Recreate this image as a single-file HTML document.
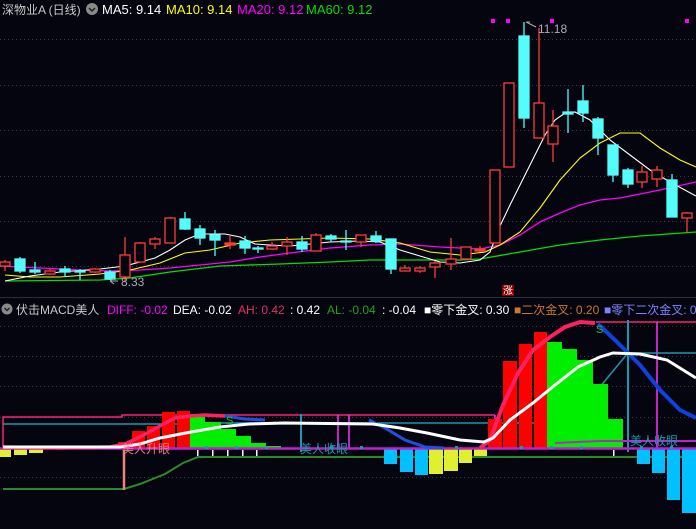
<!DOCTYPE html>
<html><head><meta charset="utf-8"><style>
html,body{margin:0;padding:0;background:#05050f;}
svg{display:block}
text{font-family:"Liberation Sans","Noto Sans CJK SC",sans-serif;}
</style></head><body>
<svg width="696" height="529" viewBox="0 0 696 529" xmlns="http://www.w3.org/2000/svg">
<rect width="696" height="529" fill="#05050f"/>
<g stroke="#3a3a48" stroke-dasharray="1,3" stroke-width="1">
<line x1="0" y1="39.5" x2="696" y2="39.5"/><line x1="0" y1="85.5" x2="696" y2="85.5"/><line x1="0" y1="130.5" x2="696" y2="130.5"/><line x1="0" y1="176.5" x2="696" y2="176.5"/><line x1="0" y1="221.5" x2="696" y2="221.5"/><line x1="0" y1="266.5" x2="696" y2="266.5"/>
<line x1="0" y1="326.5" x2="696" y2="326.5"/><line x1="0" y1="356.5" x2="696" y2="356.5"/><line x1="0" y1="386.5" x2="696" y2="386.5"/><line x1="0" y1="417.5" x2="696" y2="417.5"/><line x1="0" y1="477.5" x2="696" y2="477.5"/>
</g>
<line x1="0" y1="297.5" x2="696" y2="297.5" stroke="#2e2e38"/>
<text x="2" y="14" font-size="12" fill="#c8c8c8">深物业A (日线)</text>
<circle cx="92" cy="9" r="6" fill="#8a8a8a"/><path d="M89 8 L92 11 L95 8" stroke="#202020" stroke-width="1.5" fill="none"/>
<text x="102" y="14" font-size="13" fill="#ffffff">MA5: 9.14</text>
<text x="166" y="14" font-size="13" fill="#ffff00">MA10: 9.14</text>
<text x="237" y="14" font-size="13" fill="#ff00ff">MA20: 9.12</text>
<text x="306" y="14" font-size="13" fill="#00e000">MA60: 9.12</text>
<g fill="#ff00ff"><rect x="491" y="19" width="4" height="4"/><rect x="506" y="19" width="4" height="4"/><rect x="550" y="19" width="4" height="4"/><rect x="685" y="19" width="4" height="4"/></g>
<polyline fill="none" stroke="#00e000" stroke-width="1.3" points="5,281 100,280 130,278 170,272 220,266 280,264 330,262 370,260 420,260 460,260 480,259 520,252 560,245 600,240 640,236 696,232"/>
<polyline fill="none" stroke="#ff00ff" stroke-width="1.3" points="0,266 40,268 80,270 110,271 140,270 170,268 200,265 230,262 260,257 290,253 330,248 370,245 400,244 440,247 480,249 500,245 520,235 540,222 560,213 580,205 600,200 620,198 660,190 696,182"/>
<polyline fill="none" stroke="#ffff00" stroke-width="1.1" points="5,275 30,277 60,277 100,274 130,270 160,263 185,253 210,250 240,243 270,240 300,239 330,238 370,239 400,243 430,252 460,255 485,252 500,245 520,232 540,208 560,180 580,158 600,143 620,133 640,133 660,148 680,160 696,167"/>
<polyline fill="none" stroke="#ffffff" stroke-width="1.1" points="5,281 30,276 60,272 100,269 125,266 140,262 155,258 170,250 185,240 195,236 205,234 225,234 240,237 255,244 270,245 290,246 310,244 330,242 360,241 380,242 400,250 420,256 440,262 460,263 480,260 490,252 500,226 510,205 520,185 530,165 545,135 555,120 565,113 575,112 590,120 610,140 630,155 650,170 670,182 696,196"/>
<g stroke="#ff3b3b" stroke-width="1.3" fill="#05050f">
<line x1="5" y1="260" x2="5" y2="271"/><rect x="0" y="262" width="10" height="4"/>
<line x1="50" y1="268" x2="50" y2="275"/><rect x="45" y="271" width="10" height="3"/>
<line x1="95" y1="268" x2="95" y2="273"/><rect x="90" y="269" width="10" height="3"/>
<line x1="125" y1="237" x2="125" y2="282"/><rect x="120" y="255" width="10" height="22"/>
<line x1="140" y1="242" x2="140" y2="262"/><rect x="135" y="243" width="10" height="19"/>
<line x1="155" y1="237" x2="155" y2="249"/><rect x="150" y="239" width="10" height="5"/>
<line x1="170" y1="217" x2="170" y2="243"/><rect x="165" y="218" width="10" height="25"/>
<line x1="230" y1="236" x2="230" y2="249"/><rect x="225" y="243" width="10" height="2" fill="#ff3b3b"/>
<line x1="272" y1="242" x2="272" y2="250"/><rect x="267" y="246" width="10" height="3"/>
<line x1="287" y1="237" x2="287" y2="255"/><rect x="282" y="242" width="10" height="4"/>
<line x1="316" y1="233" x2="316" y2="251"/><rect x="311" y="235" width="10" height="16"/>
<line x1="361" y1="235" x2="361" y2="247"/><rect x="356" y="235" width="10" height="7"/>
<line x1="405" y1="265" x2="405" y2="271"/><rect x="400" y="268" width="10" height="3"/>
<line x1="420" y1="266" x2="420" y2="273"/><rect x="415" y="268" width="10" height="3"/>
<line x1="435" y1="261" x2="435" y2="278"/><rect x="430" y="263" width="10" height="4"/>
<line x1="451" y1="238" x2="451" y2="270"/><rect x="446" y="259" width="10" height="5"/>
<rect x="461" y="247" width="10" height="12"/>
<line x1="480" y1="246" x2="480" y2="252"/><rect x="475" y="249" width="10" height="2" fill="#ff3b3b"/>
<rect x="490" y="170" width="10" height="73"/>
<rect x="504" y="83" width="10" height="84"/>
<line x1="539" y1="28" x2="539" y2="138"/><rect x="534" y="103" width="10" height="35"/>
<line x1="553" y1="110" x2="553" y2="162"/><rect x="548" y="126" width="10" height="18"/>
<line x1="642" y1="166" x2="642" y2="188"/><rect x="637" y="172" width="10" height="10"/>
<line x1="657" y1="166" x2="657" y2="187"/><rect x="652" y="170" width="10" height="9"/>
<line x1="687" y1="212" x2="687" y2="232"/><rect x="682" y="213" width="10" height="5"/>
</g>
<g stroke="#54fcfc" stroke-width="1.3" fill="#54fcfc">
<line x1="20" y1="257" x2="20" y2="273"/><rect x="15" y="259" width="10" height="12"/>
<line x1="35" y1="262" x2="35" y2="274"/><rect x="30" y="270" width="10" height="2"/>
<line x1="65" y1="266" x2="65" y2="277"/><rect x="60" y="269" width="10" height="3"/>
<line x1="80" y1="269" x2="80" y2="280"/><rect x="75" y="271" width="10" height="1"/>
<line x1="110" y1="270" x2="110" y2="280"/><rect x="105" y="272" width="10" height="7"/>
<line x1="185" y1="212" x2="185" y2="230"/><rect x="180" y="219" width="10" height="10"/>
<line x1="200" y1="225" x2="200" y2="245"/><rect x="195" y="229" width="10" height="9"/>
<line x1="215" y1="230" x2="215" y2="256"/><rect x="210" y="235" width="10" height="5"/>
<line x1="245" y1="236" x2="245" y2="254"/><rect x="240" y="241" width="10" height="7"/>
<line x1="258" y1="246" x2="258" y2="253"/><rect x="253" y="248" width="10" height="1"/>
<line x1="302" y1="236" x2="302" y2="252"/><rect x="297" y="242" width="10" height="7"/>
<line x1="331" y1="234" x2="331" y2="242"/><rect x="326" y="236" width="10" height="3"/>
<line x1="346" y1="230" x2="346" y2="250"/><rect x="341" y="241" width="10" height="1"/>
<line x1="376" y1="231" x2="376" y2="243"/><rect x="371" y="236" width="10" height="5"/>
<line x1="391" y1="239" x2="391" y2="274"/><rect x="386" y="239" width="10" height="30"/>
<line x1="524" y1="22" x2="524" y2="128"/><rect x="519" y="36" width="10" height="82"/>
<line x1="568" y1="89" x2="568" y2="133"/><rect x="563" y="112" width="10" height="2"/>
<line x1="583" y1="85" x2="583" y2="122"/><rect x="578" y="101" width="10" height="12"/>
<line x1="598" y1="117" x2="598" y2="155"/><rect x="593" y="119" width="10" height="19"/>
<line x1="613" y1="145" x2="613" y2="182"/><rect x="608" y="145" width="10" height="30"/>
<line x1="628" y1="168" x2="628" y2="188"/><rect x="623" y="170" width="10" height="14"/>
<line x1="672" y1="174" x2="672" y2="217"/><rect x="667" y="180" width="10" height="37"/>
</g>
<path d="M526 22 L530 22 M526 22 L536 27" stroke="#aaa" fill="none"/>
<text x="538" y="33" font-size="12" fill="#a8a8b8">11.18</text>
<path d="M118 281 L110 281 M110 281 L114 278 M110 281 L114 284" stroke="#aaa" fill="none"/>
<text x="121" y="286" font-size="12" fill="#a8a8b8">8.33</text>
<rect x="502" y="285" width="12" height="11" fill="#8a0000"/>
<text x="503" y="294" font-size="10" fill="#ffffff">涨</text>
<circle cx="7" cy="309" r="5.5" fill="#8a8a8a"/><path d="M4.5 308 L7 310.5 L9.5 308" stroke="#202020" stroke-width="1.4" fill="none"/>
<text font-size="12" y="314"><tspan x="16" fill="#c8c8c8">伏击MACD美人</tspan><tspan x="107" fill="#ff00ff">DIFF: -0.02</tspan><tspan x="173" fill="#ffffff">DEA: -0.02</tspan><tspan x="238" fill="#e03060">AH: 0.42</tspan><tspan x="290" fill="#ffffff">: 0.42</tspan><tspan x="327" fill="#22a022">AL: -0.04</tspan><tspan x="382" fill="#ffffff">: -0.04</tspan><tspan x="424" fill="#ffffff">■零下金叉: 0.30</tspan><tspan x="514" fill="#c87830">■二次金叉: 0.20</tspan><tspan x="604" fill="#8080ff">■零下二次金叉: 0</tspan></text>
<g fill="none" stroke-width="1.5">
<polyline stroke="#ff2070" points="3,448 3,417 122,417 122,415 495,415"/>
<line x1="338" y1="415" x2="338" y2="448" stroke="#ff30ff"/>
<line x1="349" y1="415" x2="349" y2="448" stroke="#ff30ff"/>
<line x1="495" y1="415" x2="495" y2="448" stroke="#ff30ff"/>
<line x1="596" y1="322" x2="696" y2="322" stroke="#ff2070"/>
<line x1="657" y1="322" x2="657" y2="448" stroke="#ff30ff"/>
<polyline stroke="#1a9aae" points="3,424 200,424 200,423 570,423 628,353 696,353"/>
<line x1="301" y1="414" x2="301" y2="452" stroke="#1a9aae" stroke-width="2"/>
<line x1="628" y1="320" x2="628" y2="452" stroke="#1a9aae" stroke-width="2"/>
<polyline stroke="#2a8a2a" stroke-width="2" points="3,489 124,489 140,484 165,474 183,463 198,457 696,457"/>
<line x1="124" y1="448" x2="124" y2="490" stroke="#f08080" stroke-width="2.5"/>
</g>
<g fill="#ffffff"><rect x="197" y="450" width="1.5" height="6"/><rect x="212" y="450" width="1.5" height="6"/><rect x="227" y="450" width="1.5" height="6"/><rect x="242" y="450" width="1.5" height="6"/><rect x="256" y="450" width="1.5" height="6"/><rect x="613" y="450" width="1.5" height="6"/></g>
<g fill="#ff0000"><rect x="118" y="442" width="12" height="6"/><rect x="132" y="431" width="13" height="17"/><rect x="147" y="426" width="13" height="22"/><rect x="162" y="412" width="13" height="36"/><rect x="177" y="411" width="13" height="37"/>
<rect x="488" y="419" width="14" height="29"/><rect x="503" y="361" width="14" height="87"/><rect x="519" y="344" width="13" height="104"/><rect x="534" y="332" width="13" height="116"/></g>
<g fill="#00ee00"><rect x="190" y="417" width="15" height="31"/><rect x="205" y="422" width="16" height="26"/><rect x="221" y="429" width="15" height="19"/><rect x="236" y="436" width="15" height="12"/><rect x="251" y="443" width="15" height="5"/><rect x="266" y="446" width="15" height="2"/>
<rect x="547" y="342" width="15" height="106"/><rect x="562" y="349" width="15" height="99"/><rect x="577" y="360" width="16" height="88"/><rect x="593" y="384" width="15" height="64"/><rect x="608" y="419" width="15" height="29"/></g>
<g fill="#00c0ff"><rect x="384" y="448" width="13" height="16"/><rect x="400" y="448" width="13" height="24"/><rect x="415" y="448" width="13" height="27"/>
<rect x="637" y="448" width="13" height="16"/><rect x="652" y="448" width="13" height="25"/><rect x="667" y="448" width="13" height="52"/><rect x="682" y="448" width="14" height="65"/></g>
<g fill="#e0f030"><rect x="0" y="448" width="11" height="9"/><rect x="14" y="448" width="13" height="7"/><rect x="29" y="448" width="14" height="5"/>
<rect x="429" y="448" width="14" height="26"/><rect x="444" y="448" width="14" height="23"/><rect x="459" y="448" width="13" height="15"/><rect x="474" y="448" width="13" height="8"/></g>
<line x1="0" y1="448.5" x2="696" y2="448.5" stroke="#c020d0" stroke-width="2.5"/>
<polyline fill="none" stroke="#c020d0" stroke-width="2" points="555,443 600,441 696,441"/>
<g fill="#1a9aae"><rect x="205" y="446" width="3" height="3"/><rect x="235" y="446" width="3" height="3"/><rect x="265" y="446" width="3" height="3"/><rect x="330" y="446" width="3" height="3"/><rect x="360" y="446" width="3" height="3"/><rect x="455" y="446" width="3" height="3"/><rect x="520" y="446" width="3" height="3"/><rect x="550" y="446" width="3" height="3"/><rect x="580" y="446" width="3" height="3"/><rect x="640" y="446" width="3" height="3"/><rect x="670" y="446" width="3" height="3"/></g>
<polyline fill="none" stroke="#ff2060" stroke-width="3.5" points="3,447 60,448 110,447 125,444 140,437 160,426 175,418 190,416 205,415 225,416"/>
<polyline fill="none" stroke="#2050e0" stroke-width="3" points="225,416 245,419 265,420"/>
<polyline fill="none" stroke="#2050e0" stroke-width="3" points="369,420 385,428 405,440 425,447 444,448"/>
<polyline fill="none" stroke="#ff2060" stroke-width="4" points="480,448 490,440 503,405 518,373 533,350 550,337 565,327 580,322 595,323"/>
<polyline fill="none" stroke="#1040e0" stroke-width="4" points="598,324 615,340 640,365 660,390 680,410 696,418"/>
<polyline fill="none" stroke="#ffffff" stroke-width="3" points="3,447 120,447 140,444 160,438 191,432 220,427 249,424 284,423 373,424 400,428 427,433 460,440 484,442 493,438 510,420 533,403 555,385 578,367 600,357 613,353 640,354 667,360 696,378"/>
<text x="226" y="424" font-size="11" fill="#20c020">S</text>
<text x="596" y="333" font-size="11" fill="#20c020">S</text>
<text x="122" y="453" font-size="12" fill="#f08080">美人升眼</text>
<text x="300" y="453" font-size="12" fill="#1a9aae">美人收眼</text>
<text x="630" y="445" font-size="12" fill="#1a9aae">美人收眼</text>
</svg>
</body></html>
